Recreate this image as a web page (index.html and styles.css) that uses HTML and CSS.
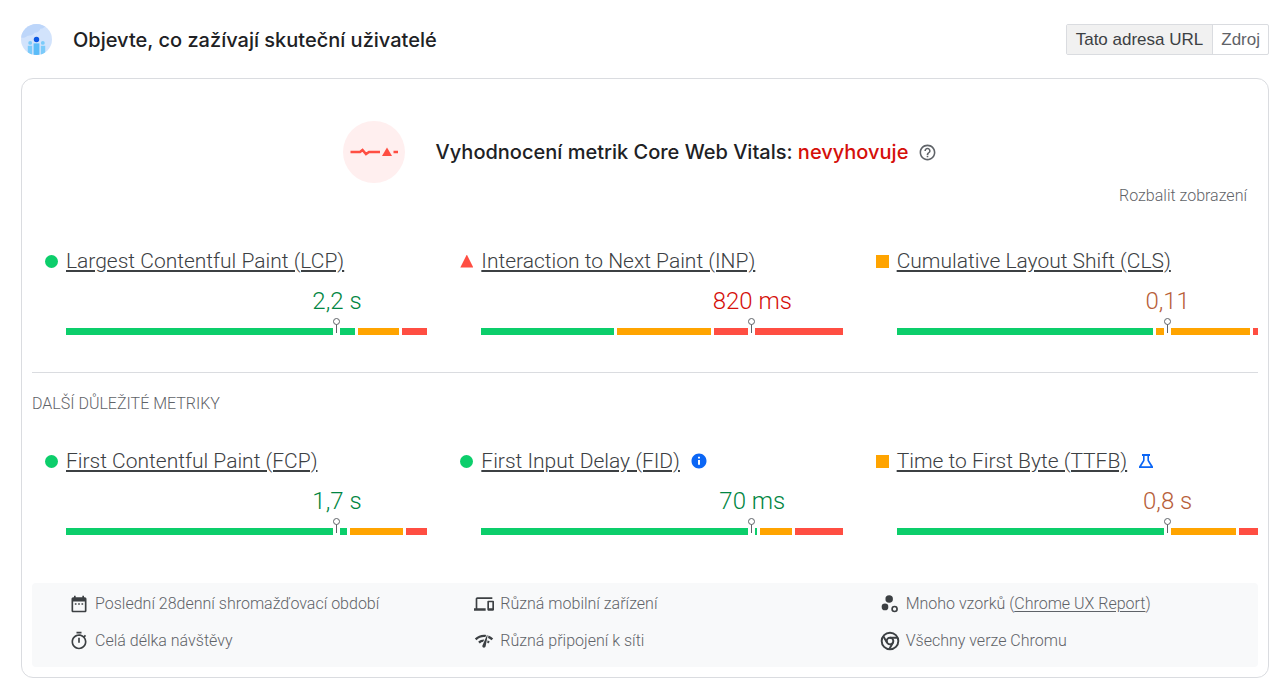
FILE: index.html
```
<!DOCTYPE html>
<html lang="cs">
<head>
    <meta charset="utf-8">
    <title>Objevte, co zažívají skuteční uživatelé</title>
    <link rel="stylesheet" href="styles.css">
</head>
<body>
    <header class="header">
        <svg class="header-icon" viewBox="0 0 32 32" aria-hidden="true">
            <clipPath id="disc"><circle cx="16" cy="16" r="16"/></clipPath>
            <g clip-path="url(#disc)">
                <rect width="32" height="32" fill="#d2e3fc"/>
                <path d="M0 14V0h26c-1 3-3 5-6 5-1 3-3 4-6 4-2 3-5 3-7 3-2 1-4 3-7 2z" fill="#bdd6fa"/>
                <g fill="#7bcbfa">
                    <circle cx="9.500" cy="19.500" r="2"/>
                    <circle cx="22.500" cy="19.500" r="2"/>
                    <rect x="7" y="22.500" width="4.500" height="10"/>
                    <rect x="20.500" y="22.500" width="4.500" height="10"/>
                </g>
                <rect x="13" y="20" width="6" height="12" fill="#5bbcf8"/>
                <circle cx="16" cy="16" r="2.800" fill="#0b57e3"/>
            </g>
        </svg>
        <h1 class="title">Objevte, co zažívají skuteční uživatelé</h1>
        <div class="toggle">
            <button type="button" class="toggle-btn active">Tato adresa URL</button>
            <button type="button" class="toggle-btn">Zdroj</button>
        </div>
    </header>

    <main class="card">
        <div class="summary">
            <svg class="summary-icon" viewBox="0 0 62 62" aria-hidden="true">
                <circle cx="31" cy="31" r="31" fill="#ffefef"/>
                <path d="M7.500 31H17l2.500-2 3.500 4 3-2h11M50.500 31h4.500" fill="none" stroke="#ff4e42" stroke-width="2.500"/>
                <path d="M39 35l5-8.500 5 8.500z" fill="#ff4e42"/>
            </svg>
            <h2 class="title">Vyhodnocení metrik Core Web Vitals: <span class="failed">nevyhovuje</span></h2>
            <button type="button" class="help" aria-label="Nápověda">
                <svg viewBox="0 0 24 24"><path d="M11 18h2v-2h-2v2zm1-16C6.480 2 2 6.480 2 12s4.480 10 10 10 10-4.480 10-10S17.520 2 12 2zm0 18c-4.410 0-8-3.590-8-8s3.590-8 8-8 8 3.590 8 8-3.590 8-8 8zm0-14c-2.210 0-4 1.790-4 4h2c0-1.100.9-2 2-2s2 .9 2 2c0 2-3 1.750-3 5h2c0-2.250 3-2.500 3-5 0-2.210-1.790-4-4-4z"/></svg>
            </button>
        </div>
        <div class="expand-row">
            <button type="button" class="expand">Rozbalit zobrazení</button>
        </div>

        <section class="metrics">
            <article class="metric good">
                <div class="metric-name"><span class="mark"></span><a href="#lcp">Largest Contentful Paint (LCP)</a></div>
                <div class="metric-value"><span>2,2 s</span></div>
                <div class="bar">
                    <i class="seg green" style="flex-grow: 289"></i><i class="seg orange" style="flex-grow: 41"></i><i class="seg red" style="flex-grow: 25"></i>
                    <svg class="pin" viewBox="0 0 7 17"><circle cx="3.500" cy="3.500" r="3"/><path d="M3.500 6.500V15"/></svg>
                </div>
            </article>
            <article class="metric poor">
                <div class="metric-name"><span class="mark"></span><a href="#inp">Interaction to Next Paint (INP)</a></div>
                <div class="metric-value"><span>820 ms</span></div>
                <div class="bar">
                    <i class="seg green" style="flex-grow: 133"></i><i class="seg orange" style="flex-grow: 93"></i><i class="seg red" style="flex-grow: 129"></i>
                    <svg class="pin" viewBox="0 0 7 17"><circle cx="3.500" cy="3.500" r="3"/><path d="M3.500 6.500V15"/></svg>
                </div>
            </article>
            <article class="metric average">
                <div class="metric-name"><span class="mark"></span><a href="#cls">Cumulative Layout Shift (CLS)</a></div>
                <div class="metric-value"><span>0,11</span></div>
                <div class="bar">
                    <i class="seg green" style="flex-grow: 256"></i><i class="seg orange" style="flex-grow: 94"></i><i class="seg red" style="flex-grow: 5"></i>
                    <svg class="pin" viewBox="0 0 7 17"><circle cx="3.500" cy="3.500" r="3"/><path d="M3.500 6.500V15"/></svg>
                </div>
            </article>
        </section>

        <h3 class="other">Další důležité metriky</h3>

        <section class="metrics">
            <article class="metric good">
                <div class="metric-name"><span class="mark"></span><a href="#fcp">First Contentful Paint (FCP)</a></div>
                <div class="metric-value"><span>1,7 s</span></div>
                <div class="bar">
                    <i class="seg green" style="flex-grow: 281"></i><i class="seg orange" style="flex-grow: 53"></i><i class="seg red" style="flex-grow: 21"></i>
                    <svg class="pin" viewBox="0 0 7 17"><circle cx="3.500" cy="3.500" r="3"/><path d="M3.500 6.500V15"/></svg>
                </div>
            </article>
            <article class="metric good">
                <div class="metric-name"><span class="mark"></span><a href="#fid">First Input Delay (FID)</a>
                    <svg class="badge" viewBox="0 0 24 24"><path d="M12 2C6.480 2 2 6.480 2 12s4.480 10 10 10 10-4.480 10-10S17.520 2 12 2zm1.300 15h-2.600v-6.500h2.600V17zm0-8.200h-2.600V6.300h2.600v2.500z"/></svg>
                </div>
                <div class="metric-value"><span>70 ms</span></div>
                <div class="bar">
                    <i class="seg green" style="flex-grow: 275"></i><i class="seg orange" style="flex-grow: 32"></i><i class="seg red" style="flex-grow: 48"></i>
                    <svg class="pin" viewBox="0 0 7 17"><circle cx="3.500" cy="3.500" r="3"/><path d="M3.500 6.500V15"/></svg>
                </div>
            </article>
            <article class="metric average">
                <div class="metric-name"><span class="mark"></span><a href="#ttfb">Time to First Byte (TTFB)</a>
                    <svg class="badge" viewBox="0 0 18 18"><path d="M5 2h8v2h-1v4.300l4 6.200V16H2v-1.500l4-6.200V4H5V2zm2.600 2v4.800L4.300 14.300h9.400L10.400 8.800V4H7.600z"/></svg>
                </div>
                <div class="metric-value"><span>0,8 s</span></div>
                <div class="bar">
                    <i class="seg green" style="flex-grow: 269"></i><i class="seg orange" style="flex-grow: 67"></i><i class="seg red" style="flex-grow: 19"></i>
                    <svg class="pin" viewBox="0 0 7 17"><circle cx="3.500" cy="3.500" r="3"/><path d="M3.500 6.500V15"/></svg>
                </div>
            </article>
        </section>

        <ul class="info">
            <li>
                <svg viewBox="0 0 24 24"><path d="M9 11H7v2h2v-2zm4 0h-2v2h2v-2zm4 0h-2v2h2v-2zm2-7h-1V2h-2v2H8V2H6v2H5c-1.110 0-2 .9-2 2v14c0 1.100.89 2 2 2h14c1.100 0 2-.9 2-2V6c0-1.100-.9-2-2-2zm0 16H5V9h14v11z"/></svg>
                <span>Poslední 28denní shromažďovací období</span>
            </li>
            <li>
                <svg viewBox="0 0 24 24"><path d="M4 6h18V4H4c-1.100 0-2 .9-2 2v11H0v3h14v-3H4V6zm19 2h-6c-.55 0-1 .45-1 1v10c0 .55.45 1 1 1h6c.55 0 1-.45 1-1V9c0-.55-.45-1-1-1zm-1 9h-4v-7h4v7z"/></svg>
                <span>Různá mobilní zařízení</span>
            </li>
            <li>
                <svg viewBox="0 0 24 24"><circle cx="11" cy="6" r="4.500"/><circle cx="6" cy="15.500" r="4"/><circle cx="17.500" cy="18" r="3" fill="none" stroke="#3c4043" stroke-width="2"/></svg>
                <span>Mnoho vzorků (<a href="#crux">Chrome UX Report</a>)</span>
            </li>
            <li>
                <svg viewBox="0 0 24 24"><path d="M15 1H9v2h6V1zm-4 13h2V8h-2v6zm8.030-6.610l1.420-1.420c-.43-.51-.9-.99-1.410-1.410l-1.420 1.420C16.070 4.740 14.120 4 12 4c-4.970 0-9 4.030-9 9s4.020 9 9 9 9-4.030 9-9c0-2.120-.74-4.070-1.970-5.610zM12 20c-3.870 0-7-3.130-7-7s3.130-7 7-7 7 3.130 7 7-3.130 7-7 7z"/></svg>
                <span>Celá délka návštěvy</span>
            </li>
            <li>
                <svg viewBox="0 0 24 24"><path d="M15.900 5c-.17 0-.32.090-.41.230l-.07.150-5.180 11.650c-.16.290-.26.610-.26.960 0 1.110.9 2.010 2.010 2.010.96 0 1.770-.68 1.960-1.590l.010-.03L16.400 5.500c0-.28-.22-.5-.5-.5zM1 9l2 2c2.880-2.880 6.790-4.080 10.530-3.620l1.190-2.680C9.890 3.840 4.740 5.270 1 9zm20 2l2-2c-1.640-1.640-3.550-2.820-5.590-3.570l-.53 2.820c1.500.62 2.900 1.530 4.120 2.750zm-4 4l2-2c-.8-.8-1.700-1.420-2.660-1.890l-.55 2.920c.42.270.83.590 1.210.970zM5 13l2 2c1.130-1.130 2.560-1.790 4.030-2l1.280-2.880c-2.630-.08-5.300.87-7.310 2.880z"/></svg>
                <span>Různá připojení k síti</span>
            </li>
            <li>
                <svg viewBox="0 0 24 24"><g fill="none" stroke="#3c4043" stroke-width="2.300"><circle cx="12" cy="12" r="10"/><circle cx="12" cy="12" r="4"/><path d="M12 8h9M8.500 14L4 6.200M15.500 14L11 21.800"/></g></svg>
                <span>Všechny verze Chromu</span>
            </li>
        </ul>
    </main>
</body>
</html>
```
FILE: styles.css
```
body {
    margin: 0;
    padding: 24px 17px 16px 21px;
    font-family: Roboto, sans-serif;
    font-weight: 300;
    font-size: 16px;
    color: #5f6368;
    background: #fff;
}
button {
    font: inherit;
    color: inherit;
    background: none;
    border: none;
    padding: 0;
    cursor: pointer;
}
svg {
    display: block;
    fill: currentColor;
}
.header {
    display: flex;
    align-items: center;
    margin-bottom: 23px;
}
.header-icon {
    width: 31px;
    height: 31px;
    margin-right: 21px;
}
.title {
    margin: 0;
    font-family: Inter, sans-serif;
    font-size: 20px;
    font-weight: 500;
    line-height: 28px;
    color: #202124;
}
.failed {
    color: #d50f0a;
}
.toggle {
    display: flex;
    margin-left: auto;
    border: 1px solid #dadce0;
    border-radius: 2px;
}
.toggle-btn {
    padding: 0 8px;
    font-family: "Liberation Sans", sans-serif;
    font-size: 17px;
    font-weight: 400;
    line-height: 29px;
}
.toggle-btn.active {
    padding: 0 9px;
    color: #3c4043;
    background: #f1f1f1;
    border-right: 1px solid #dadce0;
}

.card {
    padding: 42px 10px 10px;
    border: 1px solid #dadce0;
    border-radius: 12px;
}
.summary {
    display: flex;
    align-items: center;
    justify-content: center;
    padding-right: 10px;
}
.summary-icon {
    width: 62px;
    height: 62px;
    margin-right: 31px;
}
.help {
    margin-left: 10px;
}
.help svg {
    width: 19px;
    height: 19px;
}
.expand-row {
    display: flex;
    justify-content: flex-end;
    padding: 3px 11px 0 0;
}
.expand {
    line-height: 20px;
}

/* metric columns */
.metrics {
    display: grid;
    grid-template-columns: repeat(3, 1fr);
    gap: 20px;
}
.expand-row + .metrics {
    padding: 40px 0 37px;
    border-bottom: 1px solid #dadce0;
}
.metric {
    padding-left: 34px;
}
.metric-name {
    display: flex;
    align-items: center;
    margin-left: -21px;
    font-size: 21px;
    line-height: 30px;
}
.metric-name a {
    color: #3c4043;
    text-decoration-thickness: 2px;
    text-underline-offset: 2px;
}
.mark {
    width: 13px;
    height: 13px;
    margin-right: 8px;
}
.good .mark {
    background: #0cce6b;
    border-radius: 50%;
}
.average .mark {
    background: #ffa400;
}
.poor .mark {
    background: #ff4e42;
    clip-path: polygon(50% 0, 100% 100%, 0 100%);
}
.badge {
    width: 18px;
    height: 18px;
    margin-left: 10px;
    color: #0b66f5;
}
/* the value is centred on the 75th percentile */
.metric-value {
    width: 50%;
    margin-left: 50%;
    padding: 10px 0 12px;
    text-align: center;
    font-size: 24px;
    line-height: 30px;
}
.good .metric-value {
    color: #018642;
}
.average .metric-value {
    color: #b7603a;
}
.poor .metric-value {
    color: #d50f0a;
}
.bar {
    display: flex;
    gap: 3px;
    position: relative;
    height: 7px;
}
.seg {
    flex-basis: 0;
}
.green {
    background: #0cce6b;
}
.orange {
    background: #ffa400;
}
.red {
    background: #ff4e42;
}
.bar::after {
    content: "";
    position: absolute;
    left: 75%;
    width: 7px;
    height: 7px;
    margin-left: -4px;
    background: #fff;
}
.pin {
    position: absolute;
    z-index: 1;
    left: 75%;
    bottom: 0;
    width: 7px;
    height: 17px;
    margin-left: -4px;
    fill: #fff;
    stroke: #5f6368;
}

.other {
    margin: 21px 0 32px;
    font-size: 16px;
    font-weight: 300;
    line-height: 20px;
    text-transform: uppercase;
}

.info {
    display: grid;
    grid-template-columns: repeat(3, 1fr);
    gap: 17px 10px;
    margin: 48px 0 0;
    padding: 11px 10px 16px;
    list-style: none;
    background: #f8f9fa;
    border-radius: 4px;
}
.info li {
    display: flex;
    align-items: center;
    padding-left: 27px;
    line-height: 20px;
}
.info svg {
    width: 20px;
    height: 20px;
    margin-right: 6px;
    color: #3c4043;
}
.info a {
    color: inherit;
    text-underline-offset: 2px;
}
```
